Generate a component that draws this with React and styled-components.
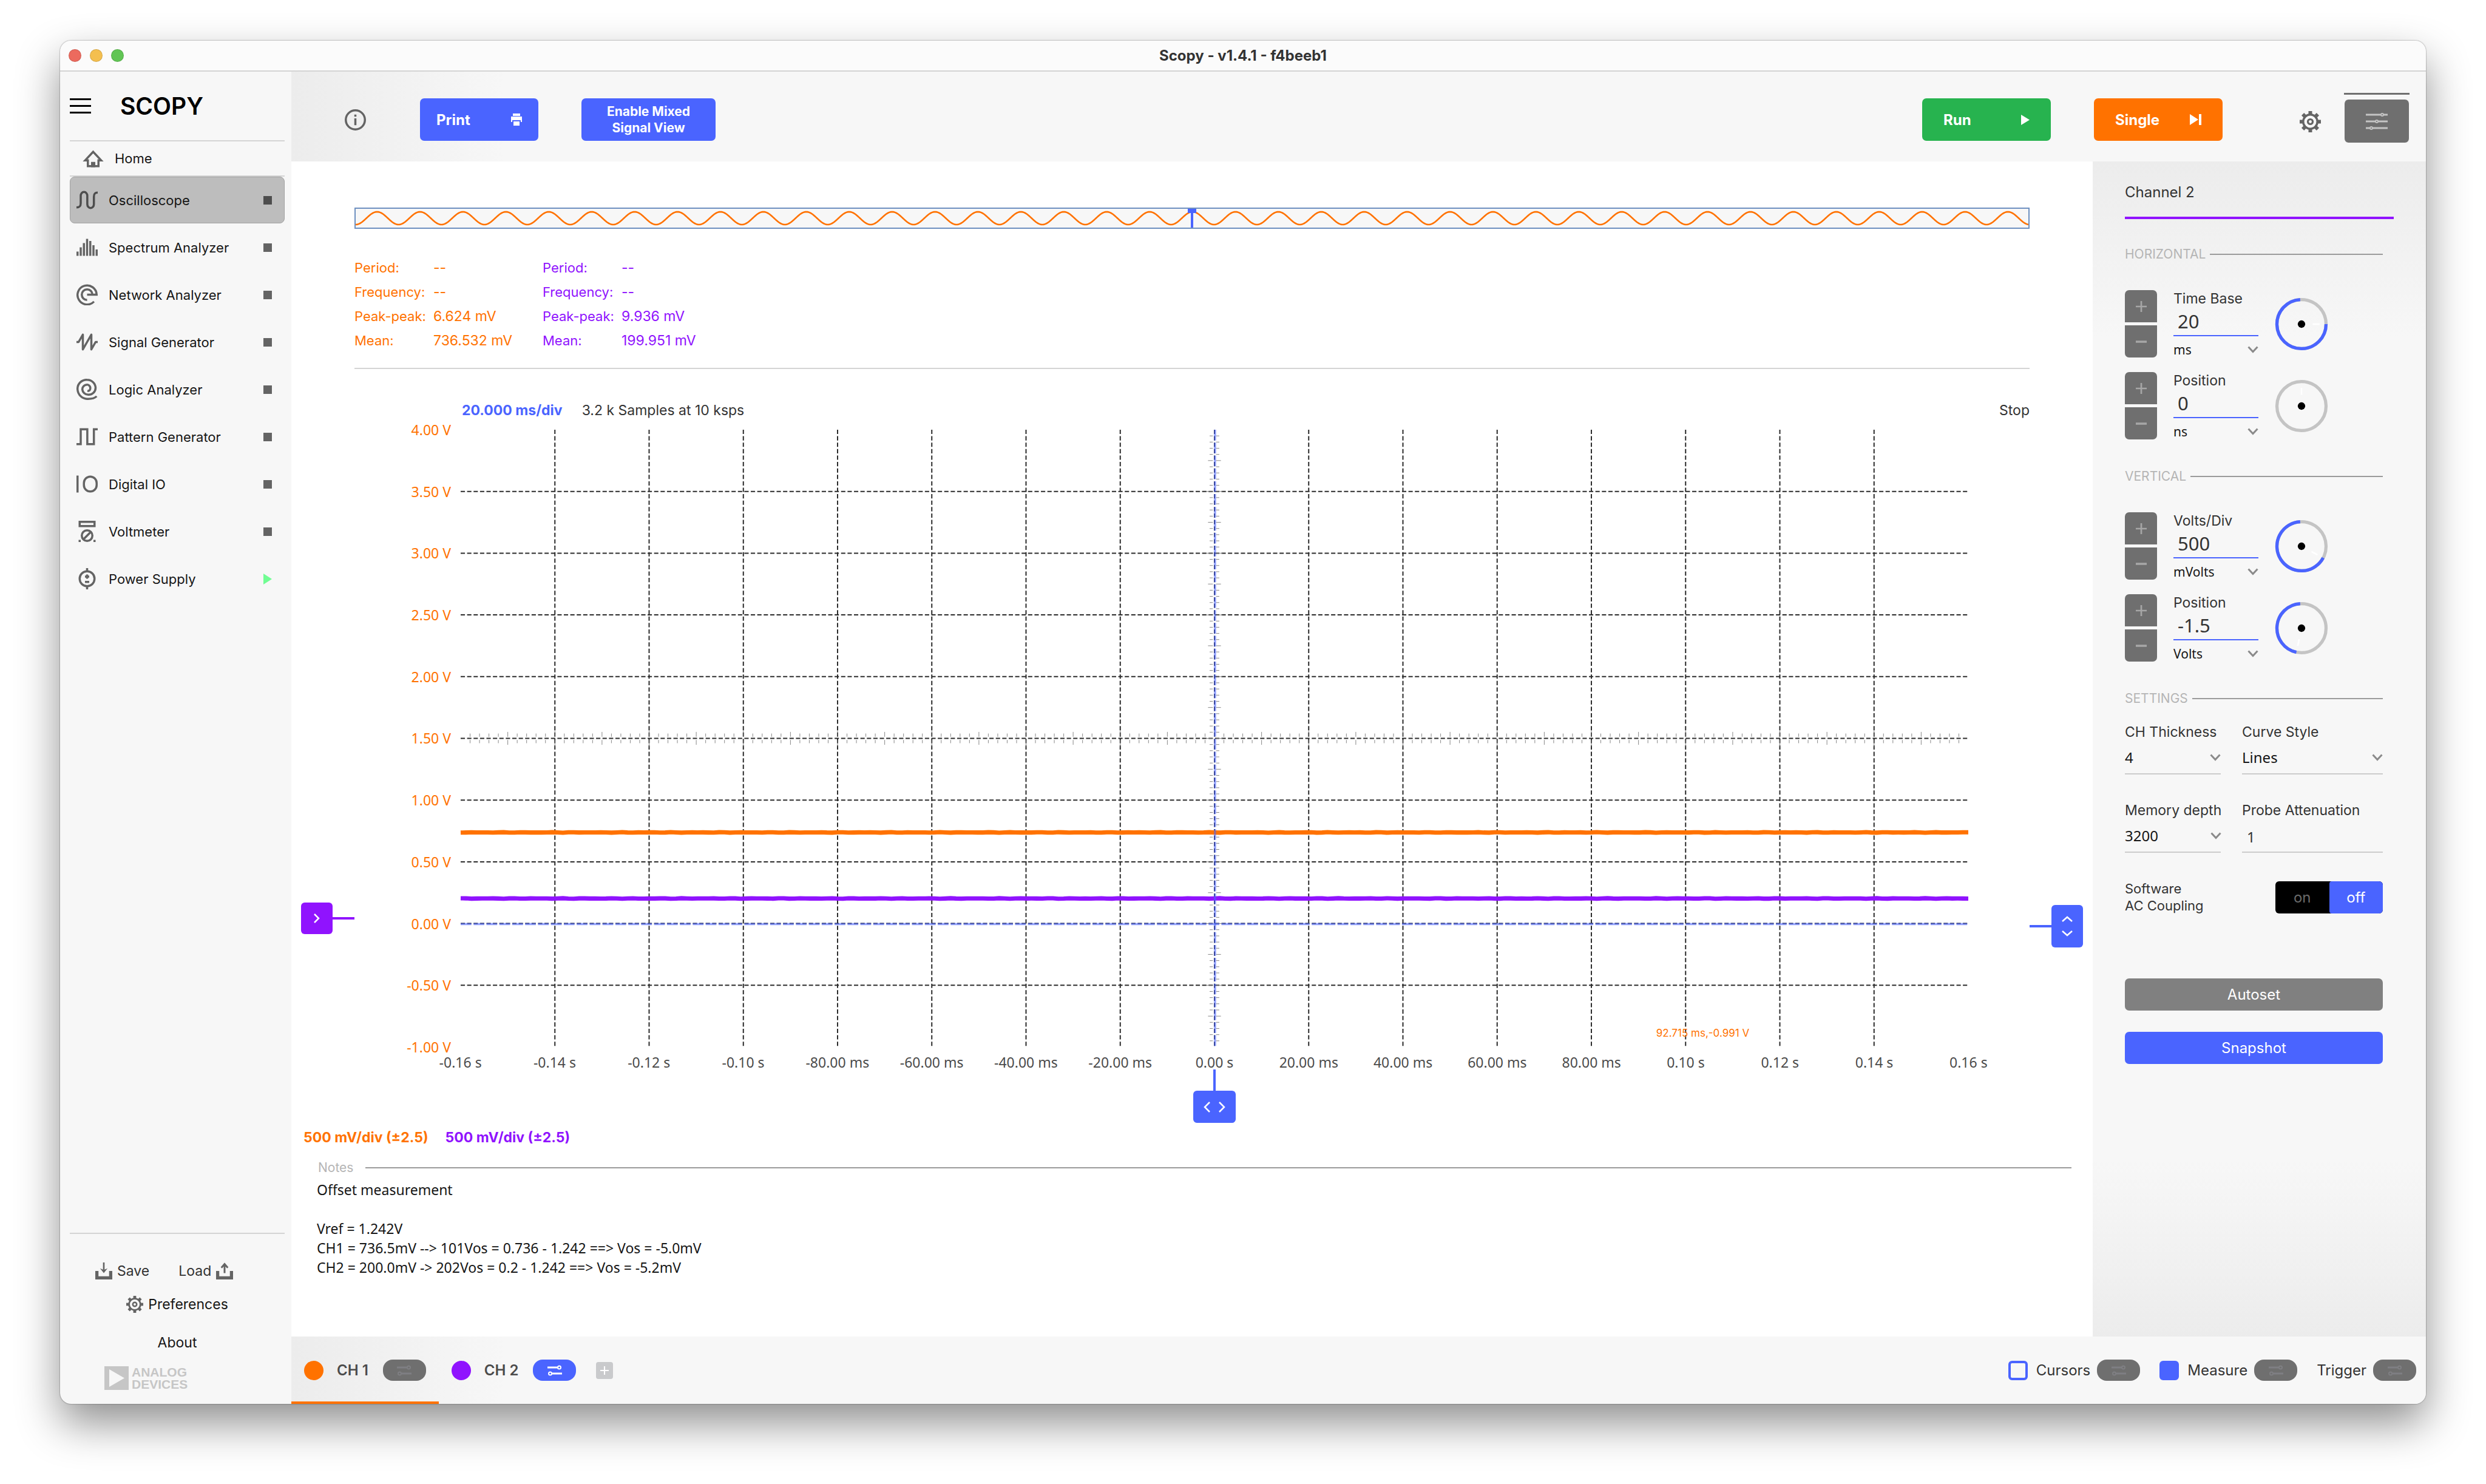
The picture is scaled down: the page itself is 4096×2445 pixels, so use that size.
import React from "react";
import styled, { createGlobalStyle, css } from "styled-components";

const C = {
  blue: "#4a64ff",
  orange: "#ff7200",
  purple: "#9013fe",
  green: "#27b34f",
  panel: "#f7f7f7",
  shade: "#ececec",
  icon: "#646464",
  slate: "#6f6f6f",
  text: "#161616",
  soft: "#333333",
  faint: "#b5b5b5",
  rule: "#9b9b9b",
};
const SANS = `Inter, "Liberation Sans", sans-serif`;
const NOTO = `"Noto Sans", "Open Sans", sans-serif`;

const Global = createGlobalStyle`
  *, *::before, *::after { box-sizing: border-box; }
  body { margin: 0; background: #fff; color: ${C.text}; font: 400 22px/28px ${SANS}; }
  button, input, select, textarea { font: inherit; color: inherit; margin: 0; padding: 0; border: 0; background: none; border-radius: 0; }
  button { cursor: pointer; }
  svg { display: block; flex: none; }
`;

/* ---------- window ---------- */
const Desktop = styled.div`
  min-height: 100vh;
  padding: 67px 99px 132px;
  display: flex;
`;
const Window = styled.div`
  flex: 1;
  min-width: 0;
  display: flex;
  flex-direction: column;
  border-radius: 18px;
  overflow: hidden;
  background: ${C.panel};
  box-shadow: 0 0 2px rgba(0, 0, 0, 0.6), 0 32px 70px rgba(0, 0, 0, 0.44);
`;
const TitleBar = styled.header`
  display: grid;
  grid-template-columns: 1fr auto 1fr;
  align-items: center;
  height: 51px;
  padding: 0 14px;
  background: #fbfbfb;
  border-bottom: 2px solid #d4d4d4;
`;
const Lights = styled.div`
  display: flex;
  gap: 14px;
`;
const Light = styled.button`
  width: 21px;
  height: 21px;
  border-radius: 50%;
  background: ${(p) => p.$color};
  border: 1px solid rgba(0, 0, 0, 0.12);
`;
const Title = styled.h1`
  margin: 0;
  font-size: 24px;
  line-height: 28px;
  font-weight: 700;
  color: ${C.soft};
`;
const Body = styled.div`
  flex: 1;
  display: grid;
  grid-template-columns: 381px minmax(0, 1fr);
`;

/* ---------- sidebar ---------- */
const Sidebar = styled.nav`
  display: flex;
  flex-direction: column;
  padding: 0 11px 23px 16px;
`;
const Brand = styled.div`
  display: flex;
  align-items: center;
  gap: 48px;
  height: 113px;
`;
const IconButton = styled.button`
  display: flex;
`;
const Wordmark = styled.span`
  font-size: 39px;
  line-height: 40px;
  font-weight: 600;
  color: #000;
`;
const Rule = styled.hr`
  width: 100%;
  height: 2px;
  margin: 0;
  border: 0;
  background: #d4d4d4;
`;
const Home = styled.button`
  display: flex;
  align-items: center;
  gap: 18px;
  height: 56px;
  padding-left: 21px;
  color: ${C.icon};
`;
const Tools = styled.ul`
  list-style: none;
  margin: 0;
  padding: 0;
  display: grid;
  gap: 1px;
`;
const Tool = styled.button`
  display: flex;
  align-items: center;
  gap: 18px;
  width: 100%;
  height: 77px;
  padding: 0 20px 0 10px;
  border: 1px solid ${(p) => (p.$active ? "#a2a2a2" : "transparent")};
  border-radius: 8px;
  background: ${(p) => (p.$active ? "#bdbdbd" : "transparent")};
  color: ${(p) => (p.$active ? "#4d4d4d" : C.icon)};
`;
const ToolName = styled.span`
  flex: 1;
  text-align: left;
  color: ${C.text};
`;
const Stopped = styled.span`
  width: 14px;
  height: 14px;
  background: currentColor;
`;
const SideFoot = styled.div`
  margin-top: auto;
  display: flex;
  flex-direction: column;
`;
const SaveLoad = styled.div`
  display: flex;
  gap: 48px;
  margin-top: 47px;
  padding-left: 42px;
  color: ${C.icon};
`;
const SideLink = styled.button`
  display: flex;
  align-items: center;
  justify-content: center;
  gap: 8px;
  height: 28px;
  margin-top: ${(p) => p.$top || 0}px;
  font-size: 23px;
  color: ${C.icon};
  span { color: ${(p) => (p.$soft ? C.soft : C.text)}; }
`;
const Maker = styled.div`
  display: flex;
  gap: 5px;
  margin-top: 25px;
  padding-left: 57px;
  color: #c6c6c6;
  font: 700 21px/20px "Liberation Sans", sans-serif;
  span { display: block; height: 39px; }
`;

/* ---------- instrument ---------- */
const Instrument = styled.div`
  display: flex;
  flex-direction: column;
`;
const bar = css`
  display: flex;
  align-items: center;
  background: linear-gradient(90deg, ${C.shade}, ${C.panel} 10%);
`;
const Toolbar = styled.div`
  ${bar}
  height: 148px;
  padding: 10px 27px 0 88px;
  color: ${C.icon};
`;
const Action = styled.button`
  display: flex;
  align-items: center;
  justify-content: ${(p) => (p.$center ? "center" : "space-between")};
  width: ${(p) => p.$w}px;
  height: 70px;
  margin-left: ${(p) => p.$left}px;
  padding: 0 ${(p) => p.$pad || 0}px;
  border-radius: 7px;
  background: ${(p) => p.$bg};
  color: #fff;
  font-weight: 700;
  font-size: ${(p) => (p.$center ? 21 : 24)}px;
  line-height: 27px;
`;
const Spacer = styled.div`
  flex: 1;
`;
const MenuTab = styled.div`
  margin: 0 0 6px 38px;
  padding-top: 8px;
  border-top: 3px solid ${C.slate};
`;
const MenuButton = styled.button`
  display: flex;
  align-items: center;
  justify-content: center;
  width: 108px;
  height: 71px;
  border: solid ${C.panel};
  border-width: 0 1px;
  border-radius: 7px;
  background: ${C.slate};
`;
const GearButton = styled(IconButton)`
  margin-left: 127px;
  padding-top: 6px;
`;
const Workspace = styled.div`
  flex: 1;
  display: grid;
  grid-template-columns: minmax(0, 1fr) 549px;
`;
const Main = styled.main`
  display: flex;
  flex-direction: column;
  background: #fff;
  padding-bottom: 98px;
`;
const Inset = styled.div`
  margin: 0 104px;
`;
const Overview = styled.div`
  position: relative;
  height: 35px;
  margin-top: 76px;
  border: 2px solid #6e90c0;
  background: ${C.panel};
  svg { width: 100%; height: 100%; }
`;
const OverviewMark = styled.div`
  position: absolute;
  inset: 0;
  display: flex;
  flex-direction: column;
  align-items: center;
  &::before { content: ""; width: 14px; height: 7px; background: ${C.blue}; }
  &::after { content: ""; width: 4px; flex: 1; background: ${C.blue}; }
`;
const Measures = styled.div`
  display: flex;
  gap: 34px;
  margin: 44px 0 25px;
`;
const MeasureTable = styled.table`
  border-collapse: collapse;
  color: ${(p) => p.$color};
  th, td { height: 40px; padding: 0; text-align: left; font-weight: 400; white-space: nowrap; }
  th { width: 130px; }
  td { width: 146px; font-size: 23px; }
`;
const PlotHead = styled.div`
  display: flex;
  gap: 32px;
  margin: 52px 104px 16px 281px;
  font-size: 23px;
  line-height: 32px;
  color: ${C.soft};
  strong { color: ${C.blue}; }
`;
const PlotGrid = styled.div`
  flex: 1;
  display: grid;
  grid-template-columns: 104px 175px minmax(0, 1fr) 101px 104px;
  grid-template-rows: minmax(600px, 1fr) auto;
`;
const YAxis = styled.div`
  display: grid;
  grid-template-rows: repeat(11, 1fr);
  align-items: center;
  margin: -51px 16px -51px 0;
  text-align: right;
  color: ${C.orange};
  font: 400 23px/28px ${NOTO};
`;
const XAxis = styled.div`
  display: grid;
  grid-template-columns: repeat(17, minmax(0, 1fr));
  margin: 13px -78px 0;
  text-align: center;
  white-space: nowrap;
  color: #4b4b4b;
  font: 400 23px/24px ${NOTO};
`;
const PlotArea = styled.div`
  position: relative;
  > svg { position: absolute; inset: 0; width: 100%; height: 100%; overflow: visible; }
`;
const Readout = styled.span`
  position: absolute;
  left: 79.3%;
  top: 97.7%;
  transform: translateY(-50%);
  white-space: nowrap;
  color: ${C.orange};
  font-size: 17px;
  line-height: 20px;
`;
const Gutter = styled.div`
  position: relative;
`;
const TimeCell = styled.div`
  grid-column: 3;
`;
const handle = css`
  display: flex;
  align-items: center;
  color: ${(p) => p.$color};
  button {
    display: flex;
    align-items: center;
    justify-content: center;
    border-radius: 6px;
    background: currentColor;
  }
`;
const SideHandle = styled.div`
  ${handle}
  position: absolute;
  top: ${(p) => p.$at};
  ${(p) => (p.$right ? "left: 0; right: 16px; flex-direction: row-reverse;" : "left: 16px; right: 0;")}
  transform: translateY(-50%);
  button { width: 52px; height: ${(p) => (p.$right ? 70 : 52)}px; }
  &::after { content: ""; flex: 1; height: 4px; background: currentColor; }
`;
const TimeHandle = styled.div`
  ${handle}
  flex-direction: column;
  button { width: 70px; height: 53px; }
  &::before { content: ""; width: 4px; height: 35px; background: currentColor; }
`;
const Scales = styled.div`
  display: flex;
  gap: 28px;
  margin: 10px 20px 0;
  font-size: 23px;
  font-weight: 700;
`;
const Scale = styled.span`
  color: ${(p) => p.$color};
`;
const NotesHead = styled.label`
  display: flex;
  align-items: center;
  gap: 20px;
  margin: 22px 35px 0 44px;
  color: ${C.faint};
  font-size: 21px;
  &::after { content: ""; flex: 1; height: 2px; background: ${C.rule}; }
`;
const Notes = styled.textarea`
  display: block;
  height: 160px;
  margin: 6px 35px 0 42px;
  resize: none;
  overflow: hidden;
  font: 400 23px/32px ${NOTO};
`;

/* ---------- channel panel ---------- */
const Panel = styled.aside`
  padding: 37px 71px 0 53px;
  background: linear-gradient(180deg, ${C.shade}, ${C.panel} 15%, ${C.panel} 85%, ${C.shade});
  color: ${C.soft};
`;
const PanelTitle = styled.h2`
  margin: 0 -18px 0 0;
  padding-bottom: 26px;
  border-bottom: 4px solid ${C.purple};
  font-size: 24px;
  line-height: 28px;
  font-weight: 400;
`;
const Section = styled.h3`
  display: flex;
  align-items: center;
  gap: 7px;
  margin: ${(p) => p.$top}px 0 ${(p) => p.$bottom}px;
  font-size: 21px;
  line-height: 28px;
  font-weight: 400;
  color: ${C.faint};
  &::after { content: ""; flex: 1; height: 2px; background: ${C.rule}; }
`;
const Spins = styled.div`
  display: grid;
  gap: 15px;
`;
const Spin = styled.div`
  display: grid;
  grid-template-columns: 53px 140px 88px;
  column-gap: 27px;
  align-items: start;
`;
const Steps = styled.div`
  display: grid;
  gap: 5px;
`;
const Step = styled.button`
  display: flex;
  align-items: center;
  justify-content: center;
  height: 53px;
  background: ${C.slate};
  border-radius: ${(p) => (p.$up ? "7px 7px 0 0" : "0 0 7px 7px")};
`;
const Fields = styled.div`
  display: grid;
  grid-template-rows: 28px 48px 44px;
`;
const FieldLabel = styled.label`
  font-size: 23px;
  line-height: 28px;
  white-space: nowrap;
`;
const ValueInput = styled.input`
  width: 100%;
  padding-left: 7px;
  border-bottom: 2px solid ${C.blue};
  font: 400 31px/44px ${NOTO};
`;
const Choice = styled.div`
  display: grid;
  grid-template-columns: minmax(0, 1fr) 18px;
  align-items: center;
  select {
    grid-area: 1 / 1 / 2 / 3;
    width: 100%;
    height: 100%;
    appearance: none;
    color: ${C.text};
    font: 400 ${(p) => (p.$boxed ? 24 : 21)}px/28px ${NOTO};
  }
  svg { grid-area: 1 / 2; pointer-events: none; }
`;
const Dial = styled.svg`
  width: 88px;
  height: 88px;
  margin-top: 12px;
`;
const Settings = styled.div`
  display: grid;
  grid-template-columns: 158px minmax(0, 1fr);
  gap: 45px 35px;
`;
const Setting = styled.div`
  display: grid;
  grid-template-rows: 28px 55px;
  border-bottom: 2px solid #cccccc;
  height: 84px;
  ${Choice} { height: 56px; }
`;
const PlainInput = styled.input`
  width: 100%;
  height: 58px;
  padding-left: 8px;
  font: 400 24px/28px ${NOTO};
`;
const Coupling = styled.div`
  display: flex;
  align-items: center;
  justify-content: space-between;
  margin: 45px 0 106px;
  font-size: 22px;
`;
const Switch = styled.button`
  display: grid;
  grid-template-columns: 1fr 1fr;
  align-items: center;
  width: 177px;
  height: 53px;
  border-radius: 6px;
  overflow: hidden;
  background: #000;
  color: #6a6a6a;
  font-size: 24px;
  span { line-height: 53px; }
  span + span { background: ${C.blue}; color: #fff; border-radius: 4px; }
`;
const Wide = styled.button`
  display: block;
  width: 100%;
  height: 53px;
  margin-bottom: 35px;
  border-radius: 7px;
  background: ${(p) => p.$bg};
  color: #fff;
  font-size: 24px;
`;

/* ---------- footer ---------- */
const Footer = styled.footer`
  ${bar}
  height: 111px;
  padding-right: 16px;
  font-size: 24px;
`;
const Channel = styled.div`
  display: flex;
  align-items: center;
  height: 111px;
  padding: 4px 21px 0;
  border-bottom: 4px solid ${(p) => (p.$on ? p.$color : "transparent")};
  color: #4b4b4b;
  label { margin: 0 24px 0 22px; font-weight: 600; white-space: nowrap; }
`;
const Dot = styled.input`
  appearance: none;
  width: 32px;
  height: 32px;
  border-radius: 50%;
  background: ${(p) => p.$color};
`;
const Pill = styled.button`
  display: flex;
  align-items: center;
  justify-content: center;
  width: 71px;
  height: 35px;
  border-radius: 16px;
  background: ${(p) => (p.$on ? C.blue : C.slate)};
`;
const AddChannel = styled.button`
  display: flex;
  align-items: center;
  justify-content: center;
  width: 28px;
  height: 28px;
  margin-left: 12px;
  border-radius: 4px;
  background: #c9cacc;
`;
const Toggle = styled.div`
  display: flex;
  align-items: center;
  gap: 11px;
  margin-left: 32px;
  color: ${C.soft};
  label { display: flex; align-items: center; gap: 14px; }
`;
const Box = styled.input`
  appearance: none;
  width: 32px;
  height: 32px;
  border: 4px solid ${C.blue};
  border-radius: 6px;
  &:checked { background: ${C.blue}; }
`;

/* ---------- drawings ---------- */
const Glyph = ({ size = 35, box = 20, children, ...rest }) => (
  <svg width={size} height={size} viewBox={`0 0 ${box} ${box}`} fill="none" stroke="currentColor" strokeWidth="2" aria-hidden="true" {...rest}>
    {children}
  </svg>
);
const Gear = ({ size = 35 }) => (
  <Glyph size={size}>
    <circle cx="10" cy="10" r="6.7" strokeWidth="2" />
    <circle cx="10" cy="10" r="2.3" strokeWidth="1.8" />
    {[0, 45, 90, 135, 180, 225, 270, 315].map((a) => (
      <path key={a} d="M10 0V3.4" strokeWidth="3.4" transform={`rotate(${a} 10 10)`} />
    ))}
  </Glyph>
);
const Chevron = () => (
  <svg width="18" height="12" viewBox="0 0 18 12" fill="none" stroke="#8a8a8a" strokeWidth="3" aria-hidden="true">
    <path d="M1.5 1.5L9 9.5L16.500 1.5" />
  </svg>
);
const Sliders = ({ color }) => (
  <svg width="26" height="22" viewBox="0 0 26 22" fill="none" stroke={color} strokeWidth="3" aria-hidden="true">
    <path d="M1 6H18M8 16H25" />
    <circle cx="20.500" cy="6" r="2.500" strokeWidth="2" />
    <circle cx="5.500" cy="16" r="2.500" strokeWidth="2" />
  </svg>
);
const toolIcons = {
  osc: <path d="M0 17C3 17 4 16 4 13V6A3 3.500 0 0 1 10.200 6V14A3 3.500 0 0 0 16.400 14V7C16.400 4 17.400 3 20 3" />,
  spectrum: <path d="M1 18V14M4 18V10M7 18V6M10 18V2M13 18V4M16 18V8M19 18V12" />,
  network: <path d="M16.500 16.500A9 9 0 1 1 19 10H10M10 15A5 5 0 1 1 15 10" />,
  signal: <path d="M0 10H2L6 3V17L14 3V17L18 10H20" strokeLinejoin="round" />,
  logic: <path d="M19 16.500C17 18.500 14 19 11 19A9.500 9.500 0 0 1 1 10A8.500 8.500 0 0 1 10 1A8 8 0 0 1 18 8.500A6.500 6.500 0 0 1 11 15A5.500 5.500 0 0 1 5.500 10A4.500 4.500 0 0 1 10 5.500A3.200 3.200 0 0 1 13 9C13 10.800 12 11.500 10.300 11.500" />,
  pattern: <path d="M0 17H4V3H10.200V17H16.400V3H20" />,
  digital: (
    <>
      <path d="M1 2V18" />
      <rect x="7" y="3" width="12" height="14" rx="6" />
    </>
  ),
  volt: (
    <>
      <path d="M3 1H17V5H3ZM7 17L13 11" />
      <circle cx="10" cy="14" r="5" />
      <path d="M2 19H4M16 19H18" />
    </>
  ),
  power: (
    <>
      <circle cx="10" cy="10" r="7" />
      <path d="M10 0V3M10 17V20M8 8H12M10 6V10M8 13H12" />
    </>
  ),
};

const tools = [
  ["Oscilloscope", "osc"],
  ["Spectrum Analyzer", "spectrum"],
  ["Network Analyzer", "network"],
  ["Signal Generator", "signal"],
  ["Logic Analyzer", "logic"],
  ["Pattern Generator", "pattern"],
  ["Digital IO", "digital"],
  ["Voltmeter", "volt"],
  ["Power Supply", "power"],
];

/* ---------- chart ---------- */
const PLOT = { w: 2806, h: 1150 };
const volts = ["4.00 V", "3.50 V", "3.00 V", "2.50 V", "2.00 V", "1.50 V", "1.00 V", "0.50 V", "0.00 V", "-0.50 V", "-1.00 V"];
const times = ["-0.16 s", "-0.14 s", "-0.12 s", "-0.10 s", "-80.00 ms", "-60.00 ms", "-40.00 ms", "-20.00 ms", "0.00 s", "20.00 ms", "40.00 ms", "60.00 ms", "80.00 ms", "0.10 s", "0.12 s", "0.14 s", "0.16 s"];

const range = (n) => Array.from({ length: n }, (_, i) => i);
const yOf = (v) => ((4 - v) / 5) * PLOT.h;
const gridPath =
  range(15).map((i) => `M${((i + 1) * PLOT.w) / 16} 0V${PLOT.h}`).join("") +
  range(9).map((i) => `M0 ${((i + 1) * PLOT.h) / 10}H${PLOT.w}`).join("");
const reach = (i) => (i % 10 === 0 ? 15 : i % 5 === 0 ? 12 : 9);
const tickPath =
  range(99).map((k) => {
    const i = k + 1;
    const y = (i * PLOT.h) / 100;
    const x = PLOT.w / 2;
    return `M${x - reach(i)} ${y}H${x - 3}M${x + 3} ${y}H${x + reach(i)}`;
  }).join("") +
  range(159).map((k) => {
    const i = k + 1;
    const x = (i * PLOT.w) / 160;
    const y = PLOT.h / 2;
    return `M${x} ${y - reach(i)}V${y - 3}M${x} ${y + 3}V${y + reach(i)}`;
  }).join("");
const trace = (v, seed) => {
  const y = yOf(v);
  return range(281)
    .map((i) => {
      const n = Math.sin(i * 1.7 + seed) * Math.sin(i * 0.31 + seed * 2) * 0.5;
      return `${i ? "L" : "M"}${(i * PLOT.w) / 280} ${(y + n).toFixed(2)}`;
    })
    .join("");
};
const wavePath = range(1560)
  .map((i) => `${i ? "L" : "M"}${i * 2} ${(18 + 12.2 * Math.cos((i * 2 * Math.PI * 2) / 80)).toFixed(2)}`)
  .join("");

const Plot = () => (
  <svg viewBox={`0 0 ${PLOT.w} ${PLOT.h}`} preserveAspectRatio="none" fill="none" role="img" aria-label="Voltage of channel 1 and channel 2 over time">
    <path d={gridPath} stroke="#2c2c2c" strokeWidth="2.26" strokeDasharray="8 4" />
    <path d={tickPath} stroke="#777" strokeWidth="1" />
    <path d={trace(0.738, 1)} stroke={C.orange} strokeWidth="8" />
    <path d={trace(0.203, 4)} stroke={C.purple} strokeWidth="8" />
    <g stroke={C.blue} strokeOpacity="0.58" strokeWidth="4" strokeDasharray="20 4">
      <path d={`M0 ${yOf(0) + 1}H${PLOT.w}`} />
      <path d={`M${PLOT.w / 2 + 1} 0V${PLOT.h}`} />
    </g>
  </svg>
);

const polar = (deg, r) => {
  const a = (deg * Math.PI) / 180;
  return `${(50 + r * Math.sin(a)).toFixed(2)} ${(50 - r * Math.cos(a)).toFixed(2)}`;
};
const Knob = ({ angle }) => (
  <Dial viewBox="0 0 100 100" fill="none" aria-hidden="true">
    <circle cx="50" cy="50" r="46" stroke="#c4c4c4" strokeWidth="6" />
    {angle > 0 && (
      <path d={`M${polar(angle, 46)}A46 46 0 ${358 - angle > 180 ? 1 : 0} 1 ${polar(357, 46)}`} stroke={C.blue} strokeWidth="6" />
    )}
    <path d={`M${polar(angle, 21)}L${polar(angle, 34)}`} stroke="#fff" strokeWidth="3" />
    <circle cx="50" cy="50" r="7" fill="#000" />
  </Dial>
);

const SpinBox = ({ id, label, value, unit, angle }) => (
  <Spin>
    <Steps>
      <Step $up aria-label={`Increase ${label}`}>
        <Glyph size={18} stroke="#a6a6a6" strokeWidth="3"><path d="M10 0V20M0 10H20" /></Glyph>
      </Step>
      <Step aria-label={`Decrease ${label}`}>
        <Glyph size={18} stroke="#a6a6a6" strokeWidth="4"><path d="M0 10H20" /></Glyph>
      </Step>
    </Steps>
    <Fields>
      <FieldLabel htmlFor={id}>{label}</FieldLabel>
      <ValueInput id={id} defaultValue={value} />
      <Choice>
        <select aria-label={`${label} unit`}><option>{unit}</option></select>
        <Chevron />
      </Choice>
    </Fields>
    <Knob angle={angle} />
  </Spin>
);

const SelectSetting = ({ id, label, value }) => (
  <Setting>
    <FieldLabel htmlFor={id}>{label}</FieldLabel>
    <Choice $boxed>
      <select id={id}><option>{value}</option></select>
      <Chevron />
    </Choice>
  </Setting>
);

const MeasureGroup = ({ color, peak, mean }) => (
  <MeasureTable $color={color}>
    <tbody>
      <tr><th scope="row">Period:</th><td>--</td></tr>
      <tr><th scope="row">Frequency:</th><td>--</td></tr>
      <tr><th scope="row">Peak-peak:</th><td>{peak}</td></tr>
      <tr><th scope="row">Mean:</th><td>{mean}</td></tr>
    </tbody>
  </MeasureTable>
);

const noteText = `Offset measurement

Vref = 1.242V
CH1 = 736.5mV --> 101Vos = 0.736 - 1.242 ==> Vos = -5.0mV
CH2 = 200.0mV -> 202Vos = 0.2 - 1.242 ==> Vos = -5.2mV`;

export default function App() {
  return (
    <Desktop>
      <Global />
      <Window>
        <TitleBar>
          <Lights>
            <Light $color="#ec6a5e" aria-label="Close" />
            <Light $color="#f4bf4f" aria-label="Minimize" />
            <Light $color="#61c554" aria-label="Zoom" />
          </Lights>
          <Title>Scopy - v1.4.1 - f4beeb1</Title>
        </TitleBar>
        <Body>
          <Sidebar>
            <Brand>
              <IconButton aria-label="Menu">
                <svg width="35" height="25" viewBox="0 0 35 25" stroke="#000" strokeWidth="3" aria-hidden="true">
                  <path d="M0 1.500H35M0 12.500H35M0 23.500H35" />
                </svg>
              </IconButton>
              <Wordmark>SCOPY</Wordmark>
            </Brand>
            <Rule />
            <Home>
              <Glyph>
                <path d="M10 3.500L17.500 11.500H15V17H5V11.500H2.500Z" />
                <path d="M10 13V18" strokeWidth="4" />
              </Glyph>
              <ToolName>Home</ToolName>
            </Home>
            <Rule />
            <Tools>
              {tools.map(([name, icon]) => (
                <li key={name}>
                  <Tool $active={icon === "osc"}>
                    <Glyph>{toolIcons[icon]}</Glyph>
                    <ToolName>{name}</ToolName>
                    {icon === "power" ? (
                      <svg width="14" height="18" viewBox="0 0 14 18" aria-label="Running"><path d="M0 0L14 9L0 18Z" fill="#71fd93" /></svg>
                    ) : (
                      <Stopped />
                    )}
                  </Tool>
                </li>
              ))}
            </Tools>
            <SideFoot>
              <Rule />
              <SaveLoad>
                <SideLink $soft>
                  <Glyph size={28} box={16}>
                    <path d="M0 8H3V13H13V8H16V16H0Z" fill="currentColor" stroke="none" />
                    <path d="M8 0V7" strokeWidth="1.500" />
                    <path d="M4.500 5.500L8 7L11.500 5.500L8 10Z" fill="currentColor" stroke="none" />
                  </Glyph>
                  <span>Save</span>
                </SideLink>
                <SideLink $soft>
                  <span>Load</span>
                  <Glyph size={28} box={16}>
                    <path d="M0 8H3V13H13V8H16V16H0Z" fill="currentColor" stroke="none" />
                    <path d="M8 10V2M5 5L8 1.500L11 5" strokeWidth="1.700" />
                  </Glyph>
                </SideLink>
              </SaveLoad>
              <SideLink $top={27}>
                <Gear size={28} />
                <span>Preferences</span>
              </SideLink>
              <SideLink $top={35}><span>About</span></SideLink>
              <Maker>
                <svg width="40" height="39" viewBox="0 0 40 39" aria-hidden="true">
                  <path d="M0 0H40V39H0ZM8 5V34L33 19.500Z" fill="currentColor" fillRule="evenodd" />
                </svg>
                <span>ANALOG<br />DEVICES</span>
              </Maker>
            </SideFoot>
          </Sidebar>

          <Instrument>
            <Toolbar>
              <IconButton aria-label="Help">
                <Glyph>
                  <circle cx="10" cy="10" r="9" />
                  <path d="M10 8.500V15M10 5V7" />
                </Glyph>
              </IconButton>
              <Action $bg={C.blue} $w={195} $left={89} $pad={27}>
                Print
                <svg width="18" height="20" viewBox="0 0 18 20" fill="#fff" aria-hidden="true">
                  <path d="M3 0H15V4H3ZM0 5H18V14H16V11H2V14H0ZM4 13H14V20H4Z" />
                </svg>
              </Action>
              <Action $bg={C.blue} $w={221} $left={71} $center>
                <span>Enable Mixed<br />Signal View</span>
              </Action>
              <Spacer />
              <Action $bg={C.green} $w={212} $left={0} $pad={35}>
                Run
                <svg width="14" height="17" viewBox="0 0 14 17" fill="#fff" aria-hidden="true"><path d="M0 0L14 8.500L0 17Z" /></svg>
              </Action>
              <Action $bg={C.orange} $w={212} $left={71} $pad={35}>
                Single
                <svg width="19" height="18" viewBox="0 0 19 18" fill="#fff" aria-hidden="true"><path d="M0 0L14 9L0 18ZM15 0H19V18H15Z" /></svg>
              </Action>
              <GearButton aria-label="General settings"><Gear /></GearButton>
              <MenuTab>
                <MenuButton aria-label="Channel settings">
                  <svg width="36" height="28" viewBox="0 0 36 28" stroke="#c4c4c4" strokeWidth="3" fill={C.slate} aria-hidden="true">
                    <path d="M0 3H36M0 14H36M0 25H36" />
                    <circle cx="27" cy="3" r="2" strokeWidth="2" />
                    <circle cx="18" cy="14" r="2" strokeWidth="2" />
                    <circle cx="9" cy="25" r="2" strokeWidth="2" />
                  </svg>
                </MenuButton>
              </MenuTab>
            </Toolbar>

            <Workspace>
              <Main>
                <Inset>
                  <Overview>
                    <svg viewBox="0 0 3118 36" preserveAspectRatio="none" fill="none" role="img" aria-label="Captured buffer">
                      <path d={wavePath} stroke={C.orange} strokeWidth="3" />
                    </svg>
                    <OverviewMark />
                  </Overview>
                  <Measures>
                    <MeasureGroup color={C.orange} peak="6.624 mV" mean="736.532 mV" />
                    <MeasureGroup color={C.purple} peak="9.936 mV" mean="199.951 mV" />
                  </Measures>
                  <Rule />
                </Inset>
                <PlotHead>
                  <strong>20.000 ms/div</strong>
                  <span>3.2 k Samples at 10 ksps</span>
                  <Spacer />
                  <span>Stop</span>
                </PlotHead>
                <PlotGrid>
                  <Gutter>
                    <SideHandle $color={C.purple} $at="79.2%">
                      <button aria-label="Channel 2 offset">
                        <svg width="12" height="18" viewBox="0 0 12 18" fill="none" stroke="#fff" strokeWidth="2.500"><path d="M2 2L9 9L2 16" /></svg>
                      </button>
                    </SideHandle>
                  </Gutter>
                  <YAxis>{volts.map((v) => <span key={v}>{v}</span>)}</YAxis>
                  <PlotArea>
                    <Plot />
                    <Readout>92.715 ms,-0.991 V</Readout>
                  </PlotArea>
                  <span />
                  <Gutter>
                    <SideHandle $color={C.blue} $at="80.4%" $right>
                      <button aria-label="Trigger level">
                        <svg width="18" height="34" viewBox="0 0 18 34" fill="none" stroke="#fff" strokeWidth="2.500"><path d="M1 9L9 2L17 9M1 25L9 32L17 25" /></svg>
                      </button>
                    </SideHandle>
                  </Gutter>
                  <TimeCell>
                    <XAxis>{times.map((t) => <span key={t}>{t}</span>)}</XAxis>
                    <TimeHandle $color={C.blue}>
                      <button aria-label="Time position">
                        <svg width="36" height="18" viewBox="0 0 36 18" fill="none" stroke="#fff" strokeWidth="2.500"><path d="M10 1L2 9L10 17M26 1L34 9L26 17" /></svg>
                      </button>
                    </TimeHandle>
                  </TimeCell>
                </PlotGrid>
                <Scales>
                  <Scale $color={C.orange}>500 mV/div (±2.5)</Scale>
                  <Scale $color={C.purple}>500 mV/div (±2.5)</Scale>
                </Scales>
                <NotesHead htmlFor="notes">Notes</NotesHead>
                <Notes id="notes" defaultValue={noteText} spellCheck={false} />
              </Main>

              <Panel>
                <PanelTitle>Channel 2</PanelTitle>
                <Section $top={44} $bottom={45}>HORIZONTAL</Section>
                <Spins>
                  <SpinBox id="timebase" label="Time Base" value="20" unit="ms" angle={90} />
                  <SpinBox id="hpos" label="Position" value="0" unit="ns" angle={0} />
                </Spins>
                <Section $top={38} $bottom={45}>VERTICAL</Section>
                <Spins>
                  <SpinBox id="vdiv" label="Volts/Div" value="500" unit="mVolts" angle={118} />
                  <SpinBox id="vpos" label="Position" value="-1.5" unit="Volts" angle={192} />
                </Spins>
                <Section $top={38} $bottom={27}>SETTINGS</Section>
                <Settings>
                  <SelectSetting id="thickness" label="CH Thickness" value="4" />
                  <SelectSetting id="curve" label="Curve Style" value="Lines" />
                  <SelectSetting id="memory" label="Memory depth" value="3200" />
                  <Setting>
                    <FieldLabel htmlFor="probe">Probe Attenuation</FieldLabel>
                    <PlainInput id="probe" defaultValue="1" />
                  </Setting>
                </Settings>
                <Coupling>
                  <label htmlFor="coupling">Software<br />AC Coupling</label>
                  <Switch id="coupling" role="switch" aria-checked="false"><span>on</span><span>off</span></Switch>
                </Coupling>
                <Wide $bg="#808080">Autoset</Wide>
                <Wide $bg={C.blue}>Snapshot</Wide>
              </Panel>
            </Workspace>

            <Footer>
              <Channel $on $color={C.orange}>
                <Dot type="checkbox" id="ch1" defaultChecked $color={C.orange} />
                <label htmlFor="ch1">CH 1</label>
                <Pill aria-label="CH 1 settings"><Sliders color="#7f7f83" /></Pill>
              </Channel>
              <Channel $color={C.purple}>
                <Dot type="checkbox" id="ch2" defaultChecked $color={C.purple} />
                <label htmlFor="ch2">CH 2</label>
                <Pill $on aria-label="CH 2 settings"><Sliders color="#fff" /></Pill>
              </Channel>
              <AddChannel aria-label="Add channel">
                <Glyph size={14} stroke="#fff" strokeWidth="3"><path d="M10 0V20M0 10H20" /></Glyph>
              </AddChannel>
              <Spacer />
              <Toggle>
                <label><Box type="checkbox" />Cursors</label>
                <Pill aria-label="Cursor settings"><Sliders color="#7f7f83" /></Pill>
              </Toggle>
              <Toggle>
                <label><Box type="checkbox" defaultChecked />Measure</label>
                <Pill aria-label="Measure settings"><Sliders color="#7f7f83" /></Pill>
              </Toggle>
              <Toggle>
                <span>Trigger</span>
                <Pill aria-label="Trigger settings"><Sliders color="#7f7f83" /></Pill>
              </Toggle>
            </Footer>
          </Instrument>
        </Body>
      </Window>
    </Desktop>
  );
}
